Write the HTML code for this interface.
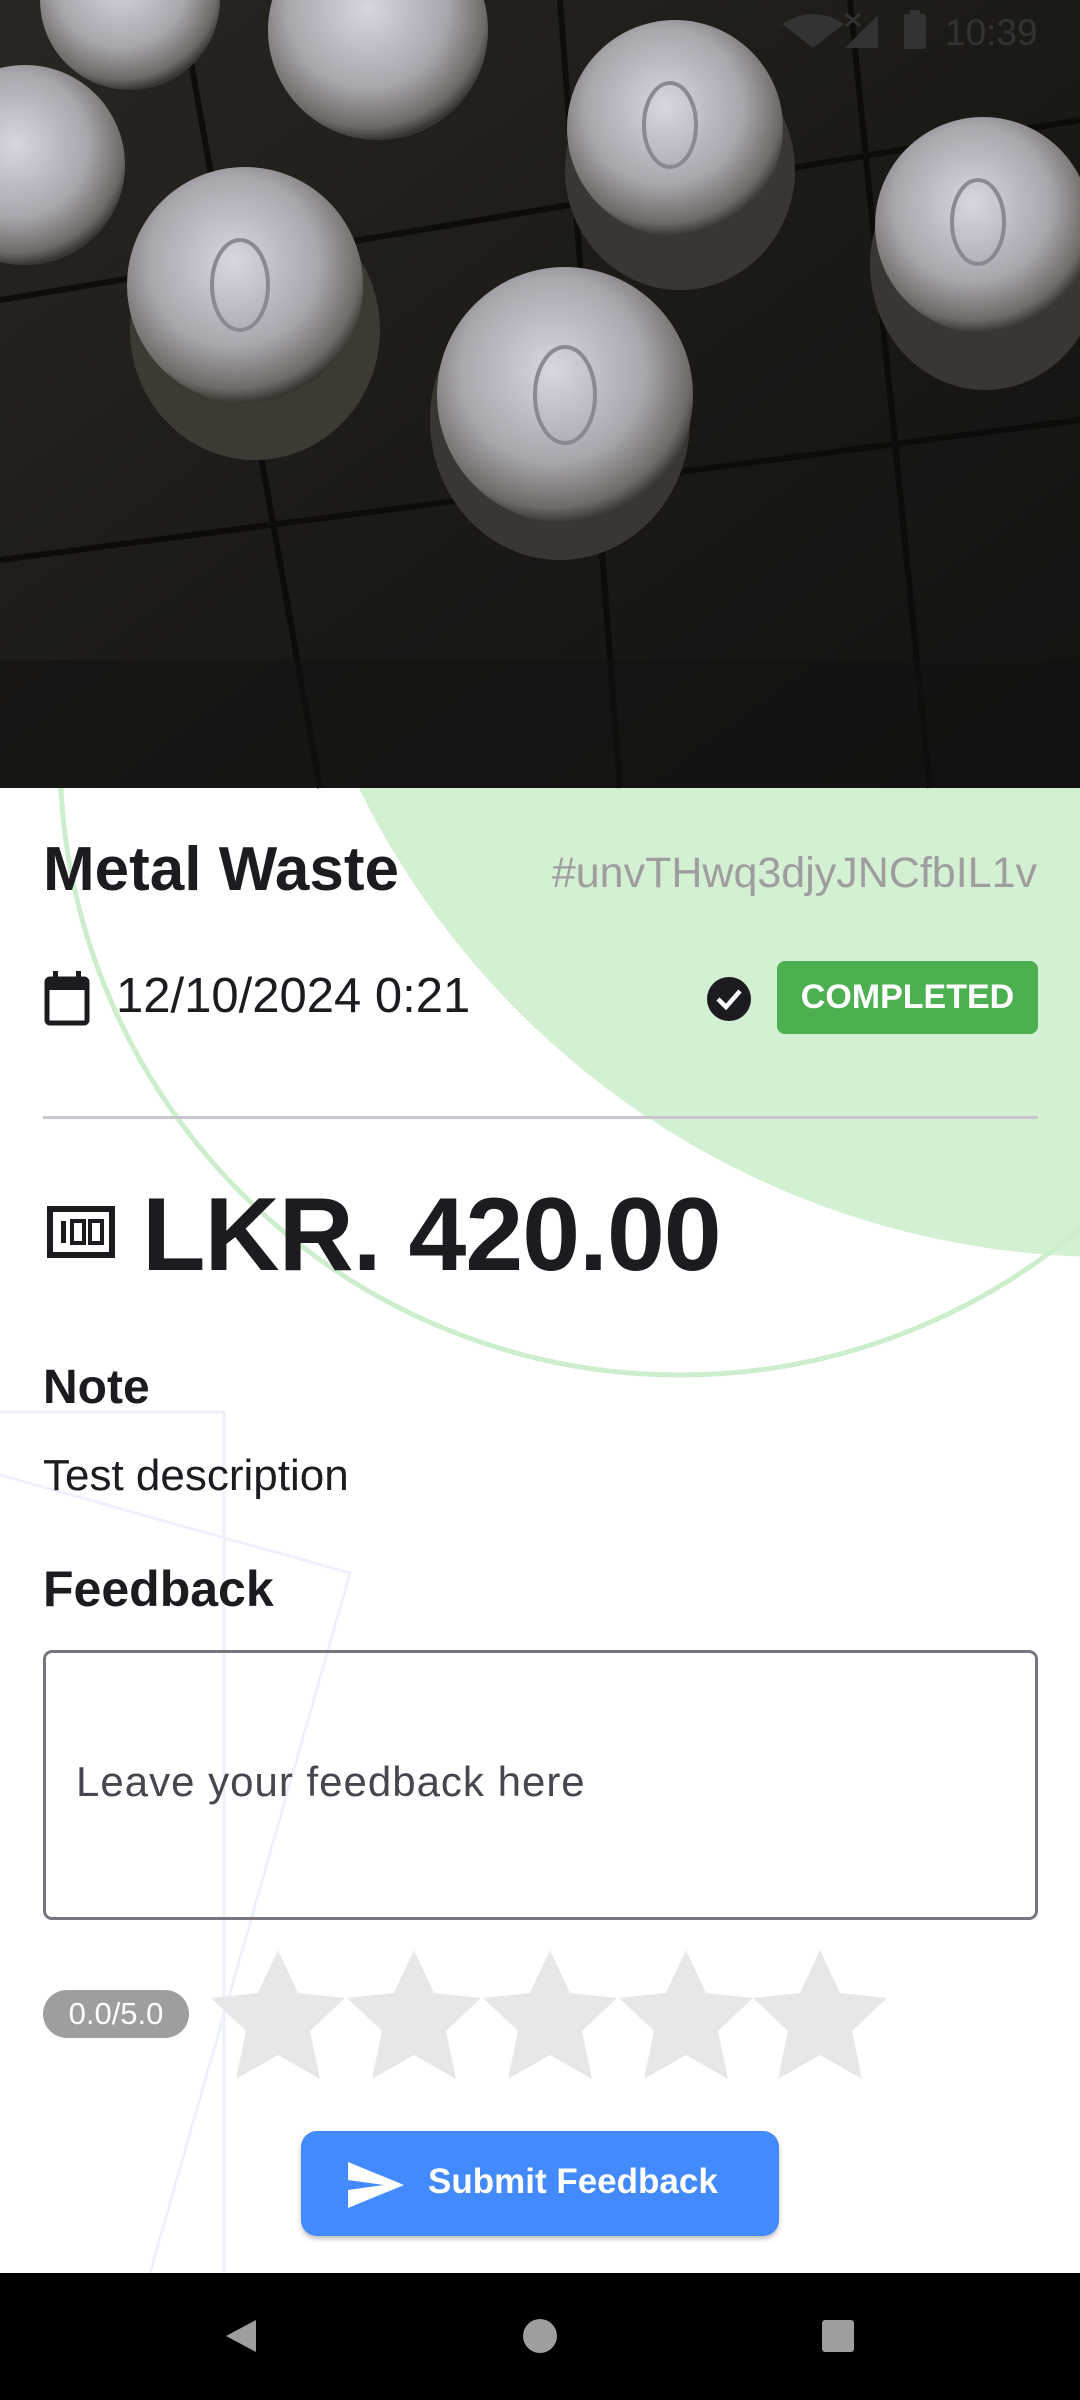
<!DOCTYPE html>
<html><head><meta charset="utf-8"><style>
*{margin:0;padding:0;box-sizing:border-box}
body{width:1080px;height:2400px;position:relative;overflow:hidden;background:#fff;font-family:"Liberation Sans",sans-serif;color:#1d1b20}
.abs{position:absolute}
</style></head><body>
<svg class="abs" style="left:0;top:0" width="1080" height="2400">
  <defs>
    <radialGradient id="can" cx="45%" cy="40%" r="60%">
      <stop offset="0" stop-color="#d8d6de"/><stop offset="0.6" stop-color="#a9a7ae"/><stop offset="0.9" stop-color="#6f6a66"/><stop offset="1" stop-color="#3a3530"/>
    </radialGradient>
    <linearGradient id="bg" x1="0" y1="0" x2="1" y2="1">
      <stop offset="0" stop-color="#2a2622"/><stop offset="0.5" stop-color="#1c1a17"/><stop offset="1" stop-color="#141210"/>
    </linearGradient>
  </defs>
  <circle cx="1110" cy="421" r="836" fill="#d3f0d3"/>
  <circle cx="680" cy="755" r="620" fill="none" stroke="#cdeecd" stroke-width="5"/>
  <g stroke="#eef0fb" stroke-width="3" fill="none">
    <polyline points="0,1412 224,1412 224,2273"/>
    <polyline points="0,1475 350,1573 150,2273"/>
  </g>
  <rect x="0" y="0" width="1080" height="788" fill="url(#bg)"/>
  <g stroke="#0c0b0a" stroke-width="6" fill="none" opacity="0.9">
    <path d="M0 300 L1080 120 M0 560 L1080 420 M180 0 L320 788 M560 0 L620 788 M850 0 L930 788"/>
  </g>
  <ellipse cx="560" cy="420" rx="130" ry="140" fill="#3b3631"/>
  <ellipse cx="255" cy="330" rx="125" ry="130" fill="#3e3a33"/>
  <ellipse cx="680" cy="170" rx="115" ry="120" fill="#3a3632"/>
  <ellipse cx="985" cy="265" rx="115" ry="125" fill="#3a3632"/>
  <circle cx="245" cy="285" r="118" fill="url(#can)"/>
  <circle cx="675" cy="128" r="108" fill="url(#can)"/>
  <circle cx="983" cy="225" r="108" fill="url(#can)"/>
  <circle cx="565" cy="395" r="128" fill="url(#can)"/>
  <circle cx="378" cy="30" r="110" fill="url(#can)"/>
  <circle cx="25" cy="165" r="100" fill="url(#can)"/>
  <circle cx="130" cy="0" r="90" fill="url(#can)"/>
  <g fill="none" stroke="#8a8890" stroke-width="4">
    <ellipse cx="240" cy="285" rx="28" ry="45"/><ellipse cx="670" cy="125" rx="26" ry="42"/>
    <ellipse cx="565" cy="395" rx="30" ry="48"/><ellipse cx="978" cy="222" rx="26" ry="42"/>
  </g>
  <rect x="0" y="660" width="1080" height="128" fill="#141210" opacity="0.5"/>
  <path d="M782 24 Q813 4 844 24 L813 48 Z" fill="#333"/>
  <path d="M845 48 L878 15 L878 48 Z" fill="#333"/>
  <path d="M846 14 L860 26 M860 14 L846 26" stroke="#333" stroke-width="3"/>
  <rect x="904" y="14" width="22" height="35" rx="2" fill="#333"/>
  <rect x="910" y="10" width="10" height="5" fill="#333"/>
  <text x="945" y="45" font-size="37" fill="#333" font-family="Liberation Sans">10:39</text>
  <rect x="0" y="2273" width="1080" height="127" fill="#000"/>
  <path d="M256 2320 L256 2352 L226 2336 Z" fill="#9e9e9e"/>
  <circle cx="540" cy="2336" r="17" fill="#9e9e9e"/>
  <rect x="822" y="2320" width="32" height="32" rx="3" fill="#9e9e9e"/>
</svg>

<div class="abs" style="left:43px;top:834px;font-size:62px;font-weight:bold">Metal Waste</div>
<div class="abs" style="right:43px;top:849px;font-size:43px;color:#9e9e9e">#unvTHwq3djyJNCfbIL1v</div>

<svg class="abs" style="left:43px;top:970px" width="50" height="56" viewBox="0 0 50 56">
  <rect x="4" y="9" width="40" height="44" rx="3" fill="none" stroke="#1d1b20" stroke-width="5"/>
  <rect x="4" y="9" width="40" height="11" fill="#1d1b20"/>
  <rect x="10" y="1" width="5" height="10" fill="#1d1b20"/><rect x="33" y="1" width="5" height="10" fill="#1d1b20"/>
</svg>
<div class="abs" style="left:116px;top:968px;font-size:49px">12/10/2024 0:21</div>

<svg class="abs" style="left:706px;top:976px" width="46" height="46" viewBox="0 0 46 46">
  <circle cx="23" cy="23" r="22" fill="#1d1b20"/>
  <path d="M12 23 L20 31 L34 15" fill="none" stroke="#fff" stroke-width="4.5"/>
</svg>
<div class="abs" style="left:777px;top:961px;width:261px;height:73px;background:#4caf50;border-radius:8px;color:#fff;font-weight:bold;font-size:34px;text-align:center;line-height:73px">COMPLETED</div>

<div class="abs" style="left:43px;top:1116px;width:995px;height:3px;background:#cac4d0"></div>

<svg class="abs" style="left:47px;top:1206px" width="68" height="52" viewBox="0 0 68 52">
  <rect x="3" y="3" width="62" height="46" fill="none" stroke="#1d1b20" stroke-width="6"/>
  <rect x="14" y="15" width="5" height="22" fill="#1d1b20"/>
  <rect x="25" y="15" width="12" height="22" fill="none" stroke="#1d1b20" stroke-width="4"/>
  <rect x="43" y="15" width="12" height="22" fill="none" stroke="#1d1b20" stroke-width="4"/>
</svg>
<div class="abs" style="left:142px;top:1176px;font-size:104px;font-weight:bold;letter-spacing:-1px">LKR. 420.00</div>

<div class="abs" style="left:43px;top:1360px;font-size:48px;font-weight:bold">Note</div>
<div class="abs" style="left:43px;top:1451px;font-size:44px">Test description</div>
<div class="abs" style="left:43px;top:1560px;font-size:50px;font-weight:bold">Feedback</div>

<div class="abs" style="left:43px;top:1650px;width:995px;height:270px;border:3px solid #79747e;border-radius:9px"></div>
<div class="abs" style="left:76px;top:1758px;font-size:42px;color:#49454f;letter-spacing:1px">Leave your feedback here</div>

<div class="abs" style="left:43px;top:1990px;width:146px;height:48px;border-radius:24px;background:#9e9e9e;color:#fff;font-size:31px;text-align:center;line-height:48px">0.0/5.0</div>
<svg class="abs" style="left:210px;top:1945px" width="690" height="140" viewBox="0 0 690 140">
  <defs><path id="st" d="M68 5 L88 48 L135 53 L100 86 L110 134 L68 110 L26 134 L36 86 L1 53 L48 48 Z" fill="#e6e7e9"/></defs>
  <use href="#st" x="0"/><use href="#st" x="136"/><use href="#st" x="272"/><use href="#st" x="408"/><use href="#st" x="542"/>
</svg>

<div class="abs" style="left:301px;top:2131px;width:478px;height:105px;background:#448aff;border-radius:16px;box-shadow:0 3px 5px rgba(0,0,0,0.25)"></div>
<svg class="abs" style="left:346px;top:2160px" width="60" height="50" viewBox="0 0 60 50">
  <path d="M2 2 L58 25 L2 48 L2 30 L38 25 L2 20 Z" fill="#fff"/>
</svg>
<div class="abs" style="left:428px;top:2162px;font-size:35px;font-weight:bold;color:#fff">Submit Feedback</div>
</body></html>
